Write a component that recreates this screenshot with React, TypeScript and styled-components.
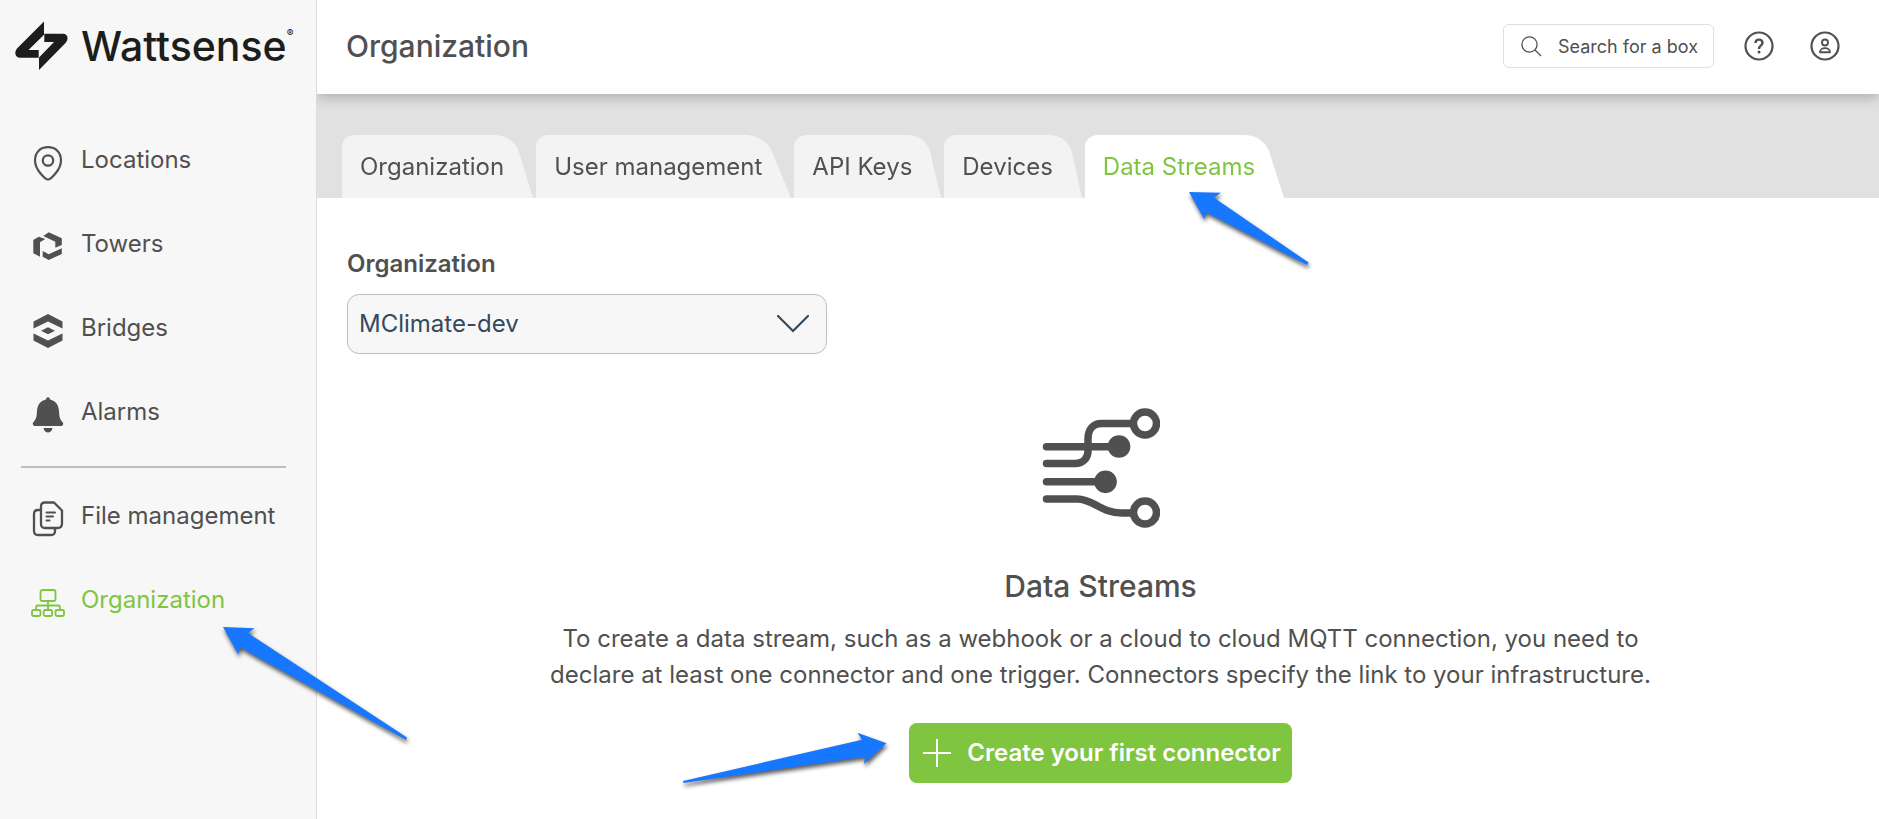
import React from "react";
import styled, { createGlobalStyle } from "styled-components";

const GlobalStyle = createGlobalStyle`
  * { box-sizing: border-box; }
  body { margin: 0; background: #fff; color: #505050; font: 400 24px/36px Inter, "Liberation Sans", sans-serif; }
  button, input, select { font: inherit; color: inherit; }
  a { color: inherit; text-decoration: none; }
`;

const Page = styled.div`
  position: relative;
  display: flex;
  min-height: 100vh;
`;

const Sidebar = styled.aside`
  flex: 0 0 317px;
  background: #f7f7f7;
  border-right: 1px solid #dcdcdc;
`;

const Brand = styled.a`
  display: flex;
  align-items: center;
  gap: 12px;
  height: 94px;
  margin-bottom: 24px;
  padding-left: 15px;
  color: #1d1d1b;
`;

const BrandName = styled.span`
  padding-bottom: 2px;
  font: 500 41px/48px Inter, "Liberation Sans", sans-serif;
  sup { font-size: 10px; line-height: 10px; vertical-align: 24px; }
`;

const NavLink = styled.a<{ $active?: boolean }>`
  display: flex;
  align-items: center;
  gap: 13px;
  height: 84px;
  padding-left: 28px;
  color: ${(p) => (p.$active ? "#7fc540" : "#505050")};
  svg { flex: none; margin-top: 6px; }
`;

const Divider = styled.hr`
  height: 2px;
  margin: 12px 30px 6px 21px;
  border: 0;
  background: #bdbdbd;
`;

const Main = styled.main`
  flex: 1;
  min-width: 0;
`;

const Header = styled.header`
  position: relative;
  z-index: 1;
  display: flex;
  align-items: center;
  height: 94px;
  padding: 0 39px 2px 29px;
  background: #fff;
  box-shadow: 0 4px 12px rgba(0, 0, 0, 0.22);
  clip-path: inset(0 0 -30px 0);
`;

const Title = styled.h1`
  flex: 1;
  margin: 0;
  font-size: 30px;
  font-weight: 500;
`;

const SearchBox = styled.label`
  display: flex;
  align-items: center;
  gap: 16px;
  width: 211px;
  height: 44px;
  padding-left: 17px;
  border: 1px solid #dedede;
  border-radius: 6px;
  input { flex: 1; min-width: 0; padding: 2px 0 0; border: 0; outline: 0; background: none; font-size: 18px; }
  input::placeholder { color: #505050; opacity: 1; }
`;

const IconButton = styled.button`
  display: flex;
  margin-left: 30px;
  padding: 0;
  border: 0;
  background: none;
  & + & { margin-left: 36px; }
`;

const TabBar = styled.nav`
  display: flex;
  align-items: flex-end;
  gap: 3px;
  height: 104px;
  padding-left: 25px;
  background: #e1e1e1;
`;

const Tab = styled.a<{ $active?: boolean }>`
  position: relative;
  z-index: 0;
  padding: 14px 29px 13px 18px;
  color: ${(p) => (p.$active ? "#7fc540" : "#505050")};
  &::before {
    content: "";
    position: absolute;
    z-index: -1;
    inset: -7px 0 0;
    border-radius: 14px 20px 0 0;
    background: ${(p) => (p.$active ? "#fff" : "#f3f3f3")};
    transform: perspective(5px) rotateX(0.46deg);
    transform-origin: bottom left;
  }
`;

const Content = styled.section`
  padding: 48px 25px 36px 30px;
`;

const FieldLabel = styled.label`
  display: block;
  margin-bottom: 12px;
  font-weight: 600;
`;

const SelectWrap = styled.div`
  display: grid;
  align-items: center;
  width: 480px;
  max-width: 100%;
  & > * { grid-area: 1 / 1; }
  svg { justify-self: end; margin-right: 18px; pointer-events: none; }
`;

const Select = styled.select`
  width: 100%;
  height: 60px;
  padding: 0 11px;
  appearance: none;
  border: 1px solid #bdbdbd;
  border-radius: 12px;
  background: #f7f7f7;
  color: #34495e;
`;

const EmptyState = styled.div`
  display: flex;
  flex-direction: column;
  align-items: center;
  margin-top: 54px;
  text-align: center;
`;

const EmptyTitle = styled.h2`
  margin: 38px 0 15px;
  font-size: 30px;
  line-height: 40px;
  font-weight: 500;
`;

const EmptyText = styled.p`
  max-width: 1110px;
  margin: 0 0 30px;
`;

const CreateButton = styled.button`
  display: flex;
  align-items: center;
  gap: 16px;
  height: 60px;
  padding: 0 11px 0 14px;
  border: 0;
  border-radius: 8px;
  background: #7fc540;
  color: #fff;
  font-weight: 600;
`;

const Pointer = styled.svg<{ $x: number; $y: number }>`
  position: absolute;
  left: ${(p) => p.$x}px;
  top: ${(p) => p.$y}px;
  overflow: visible;
  pointer-events: none;
  z-index: 2;
  fill: #1877ff;
  filter: drop-shadow(1px 3px 2px rgba(0, 0, 0, 0.65));
`;

const Logo = () => (
  <svg width="54" height="50" viewBox="0 0 54 50" fill="currentColor" overflow="visible" aria-hidden="true">
    <path d="M29 -0.500V12.700L13.500 28H23.700V35.700H5C0 35.700 -1 30 2 26.500Z" />
    <path d="M29.300 11.700H48C53 11.700 54 17 50.500 21L24 48V35.500L39 20H29.300Z" />
  </svg>
);

const icon = { width: 40, height: 40, viewBox: "0 0 40 40", "aria-hidden": true } as const;

const LocationIcon = () => (
  <svg {...icon} fill="none" stroke="currentColor" strokeWidth="2.200">
    <path d="M20 36.500C17.500 36.500 7 27 7 17.500C7 9 12.500 4.200 20 4.200S33 9 33 17.500C33 27 22.500 36.500 20 36.500Z" />
    <circle cx="20" cy="17.500" r="5.200" />
  </svg>
);
const TowerIcon = () => (
  <svg {...icon} fill="currentColor">
    <path d="M5.300 13L10.700 9.700L17.300 12L12 15.300V29.700L5.300 26.300ZM15.300 9L20.700 5.300L33.800 11.300V18L27.300 20.700V14.700ZM14.700 24L20.700 27.300L33.800 21.300V27L20.700 33L14.700 29.700Z" />
  </svg>
);
const BridgeIcon = () => (
  <svg {...icon} fill="currentColor">
    <path d="M5.500 10.500L20 3L34.500 10.500V17.500L20 10.500L5.500 17.500ZM5.500 22.500L20 29.500L34.500 22.500V29.500L20 37L5.500 29.500ZM13 19.700L20 16.200L27 19.700L20 23.300Z" />
  </svg>
);
const BellIcon = () => (
  <svg {...icon} fill="currentColor">
    <path d="M18 4.500C18 1.500 22 1.500 22 4.500C28 6 30.500 10 31 16C31.300 22 32 24.500 34.500 27C36 28.500 35 31 33 31H7C5 31 4 28.500 5.500 27C8 24.500 8.700 22 9 16C9.500 10 12 6 18 4.500ZM15.500 33H24.500C23.500 39 16.500 39 15.500 33Z" />
  </svg>
);
const FilesIcon = () => (
  <svg {...icon} fill="none" stroke="currentColor" strokeWidth="2.300" strokeLinecap="round" strokeLinejoin="round">
    <path d="M17 3.500H26L34 11.500V24.500Q34 29 29.500 29H17Q13 29 13 25V7.500Q13 3.500 17 3.500ZM12 11H10Q6 11 6 15V32Q6 36 10 36H23Q27 36 27 32V30" />
    <path d="M18.500 13.500H27M18.500 17.500H25M18.500 21.500H21.500" strokeWidth="2" />
  </svg>
);
const OrgIcon = () => (
  <svg {...icon} fill="none" stroke="currentColor" strokeWidth="1.800">
    <rect x="12.500" y="7" width="15" height="11" rx="2" />
    <rect x="4" y="27" width="8.500" height="6" rx="1.500" />
    <rect x="15.700" y="27" width="8.500" height="6" rx="1.500" />
    <rect x="27.500" y="27" width="8.500" height="6" rx="1.500" />
    <path d="M20 18V27M8.200 27V24Q8.200 22.500 10 22.500H30Q31.800 22.500 31.800 24V27" />
  </svg>
);
const StreamsIcon = () => (
  <svg width="118" height="120" viewBox="0 0 118 120" fill="none" stroke="currentColor" strokeWidth="7.500" strokeLinecap="round" aria-hidden="true">
    <path d="M4.500 38.700H77M4.500 55.500H33C42 55.500 46 49 46 43V31C46 21 51.500 15.500 59.500 15.500H90M4.500 73.800H60M4.500 91H35C52 91 58 105 80 105H90" />
    <circle cx="103" cy="15.500" r="11.500" />
    <circle cx="103" cy="104.500" r="11.500" />
    <circle cx="77" cy="38.500" r="7.600" fill="currentColor" />
    <circle cx="63.500" cy="73.800" r="7.600" fill="currentColor" />
  </svg>
);

const mainLinks = [
  { label: "Locations", Icon: LocationIcon },
  { label: "Towers", Icon: TowerIcon },
  { label: "Bridges", Icon: BridgeIcon },
  { label: "Alarms", Icon: BellIcon },
];
const tabs = ["Organization", "User management", "API Keys", "Devices", "Data Streams"];

export default function App() {
  return (
    <Page>
      <GlobalStyle />
      <Sidebar>
        <Brand href="#">
          <Logo />
          <BrandName>Wattsense<sup>®</sup></BrandName>
        </Brand>
        <nav>
          {mainLinks.map(({ label, Icon }) => (
            <NavLink href="#" key={label}><Icon />{label}</NavLink>
          ))}
          <Divider />
          <NavLink href="#"><FilesIcon />File management</NavLink>
          <NavLink href="#" $active aria-current="page"><OrgIcon />Organization</NavLink>
        </nav>
      </Sidebar>
      <Main>
        <Header>
          <Title>Organization</Title>
          <SearchBox>
            <svg width="21" height="21" viewBox="0 0 21 21" fill="none" stroke="currentColor" strokeWidth="1.300" aria-hidden="true">
              <circle cx="8.500" cy="8.500" r="7.600" />
              <path d="M14 14L20 20" />
            </svg>
            <input aria-label="Search for a box" placeholder="Search for a box" />
          </SearchBox>
          <IconButton aria-label="Help">
            <svg width="30" height="30" viewBox="0 0 30 30" fill="none" stroke="currentColor" strokeWidth="2.200" aria-hidden="true">
              <circle cx="15" cy="15" r="13.500" />
              <path d="M11.500 12C11.500 7.500 18.500 7.500 18.500 12C18.500 14.500 15 14.500 15 18" strokeWidth="2.400" />
              <circle cx="15" cy="21" r="1.500" fill="currentColor" stroke="none" />
            </svg>
          </IconButton>
          <IconButton aria-label="Account">
            <svg width="30" height="30" viewBox="0 0 30 30" fill="none" stroke="currentColor" strokeWidth="2.200" aria-hidden="true">
              <circle cx="15" cy="15" r="13.500" />
              <circle cx="15" cy="11.500" r="3" strokeWidth="1.900" />
              <path d="M10 21.200C10 15.800 20 15.800 20 21.200Z" strokeWidth="1.900" strokeLinejoin="round" />
            </svg>
          </IconButton>
        </Header>
        <TabBar>
          {tabs.map((tab) => (
            <Tab href="#" key={tab} $active={tab === "Data Streams"}>{tab}</Tab>
          ))}
        </TabBar>
        <Content>
          <FieldLabel htmlFor="organization">Organization</FieldLabel>
          <SelectWrap>
            <Select id="organization"><option>MClimate-dev</option></Select>
            <svg width="32" height="18" viewBox="0 0 32 18" fill="none" stroke="#34495e" strokeWidth="2.200" strokeLinecap="round" aria-hidden="true">
              <path d="M1 1L16 16L31 1" />
            </svg>
          </SelectWrap>
          <EmptyState>
            <StreamsIcon />
            <EmptyTitle>Data Streams</EmptyTitle>
            <EmptyText>
              To create a data stream, such as a webhook or a cloud to cloud MQTT connection, you need to declare at least one connector and one trigger. Connectors specify the link to your infrastructure.
            </EmptyText>
            <CreateButton>
              <svg width="28" height="28" viewBox="0 0 28 28" fill="none" stroke="currentColor" strokeWidth="2" strokeLinecap="round" aria-hidden="true">
                <path d="M14 0V28M0 14H28" />
              </svg>
              Create your first connector
            </CreateButton>
          </EmptyState>
        </Content>
      </Main>
      <Pointer $x={223} $y={627} width="184" height="113" aria-hidden="true">
        <path d="M0 0L31.500 1.300L25 6L184 110.500L183 113L17 20.300L15.300 27.500Z" />
      </Pointer>
      <Pointer $x={1189} $y={192} width="120" height="73" aria-hidden="true">
        <path d="M0 0L32 0.700L25 5.700L119.500 70.500L118 73L17 20.300L15.300 27.200Z" />
      </Pointer>
      <Pointer $x={683} $y={732} width="204" height="52" aria-hidden="true">
        <path d="M203.500 11.300L174.500 0.700L179 7.700L0 49L0.500 51L182 24.700L181 32Z" />
      </Pointer>
    </Page>
  );
}
